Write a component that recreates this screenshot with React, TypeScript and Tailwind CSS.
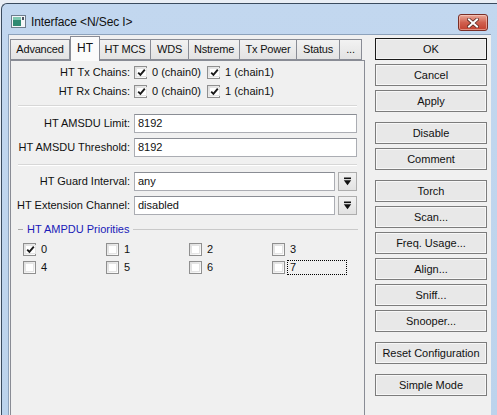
import React from "react";

const tabs: { label: string; w: number; active?: boolean }[] = [
  { label: "Advanced", w: 60 },
  { label: "HT", w: 30, active: true },
  { label: "HT MCS", w: 51 },
  { label: "WDS", w: 38 },
  { label: "Nstreme", w: 51 },
  { label: "Tx Power", w: 57 },
  { label: "Status", w: 43 },
  { label: "...", w: 22 },
];

const buttonGroups: string[][] = [
  ["OK", "Cancel", "Apply"],
  ["Disable", "Comment"],
  ["Torch", "Scan...", "Freq. Usage...", "Align...", "Sniff...", "Snooper..."],
  ["Reset Configuration"],
  ["Simple Mode"],
];

function Check({ checked }: { checked?: boolean }) {
  return (
    <span className="w-[13px] h-[13px] shrink-0 border border-[#8f8f8f] bg-gradient-to-br from-[#dcdcdc] to-white p-[1px] flex">
      <span className="flex-1 bg-white border border-[#e4e4e4] flex items-center justify-center">
        {checked && (
          <svg width="9" height="9" viewBox="0 0 9 9">
            <path d="M1.2 4.6 L3.4 6.9 L7.8 1.6" fill="none" stroke="#1a1a1a" strokeWidth="1.9" />
          </svg>
        )}
      </span>
    </span>
  );
}

function CheckItem({ checked, label, focus }: { checked?: boolean; label: string; focus?: boolean }) {
  return (
    <div className="flex items-center h-[16px]">
      <Check checked={checked} />
      {focus ? (
        <span className="ml-[2px] pl-[2px] w-[60px] h-[15px] leading-[13px] border border-dotted border-black">
          {label}
        </span>
      ) : (
        <span className="ml-[5px]">{label}</span>
      )}
    </div>
  );
}

function Label({ text }: { text: string }) {
  return <div className="w-[120px] shrink-0 text-right pr-[1px] whitespace-nowrap">{text}</div>;
}

function TextField({ value, drop }: { value: string; drop?: boolean }) {
  return (
    <div className="flex flex-1 gap-[3px] ml-[3px]">
      <div className="flex-1 h-[19px] border border-[#abadb3] border-t-[#8a8d94] bg-white pl-[3px] leading-[17px]">
        {value}
      </div>
      {drop && (
        <div className="w-[19px] h-[19px] border border-[#adadad] bg-gradient-to-b from-[#f2f2f2] to-[#e2e2e2] flex items-center justify-center">
          <svg width="9" height="9" viewBox="0 0 9 9">
            <rect x="1" y="0.5" width="7" height="1.6" fill="#111" />
            <path d="M0.8 3.2 H8.2 L4.5 8.2 Z" fill="#111" />
          </svg>
        </div>
      )}
    </div>
  );
}

function Separator() {
  return <div className="mx-[7px] h-[2px] border-t border-[#d7d7d7] border-b border-b-white" />;
}

export default function App() {
  return (
    <div className="w-[497px] h-[415px] overflow-hidden bg-[#e9eef5] pl-[1px] pt-[3px] text-[11px] text-[#111] [font-family:'Liberation_Sans',Arial,sans-serif]">
      <div className="w-[496px] h-[412px] rounded-tl-[6px] border-l border-t border-[#3a4b5e] bg-gradient-to-b from-[#c2d7ef] to-[#bcd3ec] flex flex-col">
        {/* title bar */}
        <div className="h-[30px] shrink-0 flex items-center pl-[9px] pr-[9px] pt-[3px]">
          <svg width="15" height="13" viewBox="0 0 15 13" className="mt-[2px]">
            <rect x="0.5" y="0.5" width="14" height="12" fill="#f4f6f8" stroke="#6d7c8c" />
            <rect x="2" y="2" width="8" height="9" fill="#2f8a72" />
            <rect x="2" y="2" width="8" height="3" fill="#7fc7b0" />
            <rect x="11" y="2" width="2" height="3" fill="#4a5563" />
          </svg>
          <span className="ml-[5px] mt-[2px] text-[12px] tracking-[-0.1px]">Interface &lt;N/Sec I&gt;</span>
          <div className="ml-auto mt-[4px] w-[30px] h-[17px] rounded-[3px] border border-[#7a2e26] bg-gradient-to-b from-[#e9a99a] via-[#d0604f] to-[#c2402f] flex items-center justify-center shadow-[inset_0_0_0_1px_rgba(255,220,210,0.5)]">
            <svg width="12" height="10" viewBox="0 0 12 10">
              <path d="M2 1.5 L10 8.5 M10 1.5 L2 8.5" stroke="#5a2a24" strokeWidth="3.6" strokeLinecap="square" />
              <path d="M2 1.5 L10 8.5 M10 1.5 L2 8.5" stroke="#ffffff" strokeWidth="2" strokeLinecap="square" />
            </svg>
          </div>
        </div>

        {/* frame + client area */}
        <div className="flex flex-1 min-h-0 pl-[6px] pr-[6px]">
          <div className="flex-1 flex border-l border-t border-[#8da2bb] bg-[#f0f0f0]">
            {/* tabs and page */}
            <div className="w-[355px] shrink-0 flex flex-col ml-[1px]">
              <div className="h-[25px] flex items-end shrink-0">
                {tabs.map((t) =>
                  t.active ? (
                    <div
                      key={t.label}
                      style={{ width: t.w }}
                      className="h-[25px] -mb-[1px] relative z-10 border border-b-0 border-[#898c95] bg-[#fbfbfb] flex items-center justify-center text-[12px] pb-[2px]"
                    >
                      {t.label}
                    </div>
                  ) : (
                    <div
                      key={t.label}
                      style={{ width: t.w }}
                      className="h-[21px] border border-l-0 first:border-l border-[#898c95] bg-gradient-to-b from-[#f2f2f2] to-[#e3e3e3] flex items-center justify-center whitespace-nowrap tracking-[-0.2px]"
                    >
                      {t.label}
                    </div>
                  )
                )}
              </div>

              <div className="flex-1 border border-[#898c95] bg-[#f0f0f0] border-b-0">
                <div className="mt-[3px] flex items-center h-[16px]">
                  <Label text="HT Tx Chains:" />
                  <div className="ml-[3px] flex items-center">
                    <div className="w-[73px]"><CheckItem checked label="0 (chain0)" /></div>
                    <CheckItem checked label="1 (chain1)" />
                  </div>
                </div>
                <div className="mt-[3px] flex items-center h-[16px]">
                  <Label text="HT Rx Chains:" />
                  <div className="ml-[3px] flex items-center">
                    <div className="w-[73px]"><CheckItem checked label="0 (chain0)" /></div>
                    <CheckItem checked label="1 (chain1)" />
                  </div>
                </div>

                <div className="mt-[6px]"><Separator /></div>

                <div className="mt-[7px] flex items-center pr-[7px]">
                  <Label text="HT AMSDU Limit:" />
                  <TextField value="8192" />
                </div>
                <div className="mt-[5px] flex items-center pr-[7px]">
                  <Label text="HT AMSDU Threshold:" />
                  <TextField value="8192" />
                </div>

                <div className="mt-[7px]"><Separator /></div>

                <div className="mt-[6px] flex items-center pr-[7px]">
                  <Label text="HT Guard Interval:" />
                  <TextField value="any" drop />
                </div>
                <div className="mt-[5px] flex items-center pr-[7px]">
                  <Label text="HT Extension Channel:" />
                  <TextField value="disabled" drop />
                </div>

                {/* priorities group */}
                <div className="mt-[7px] flex items-center pl-[7px] pr-[6px] h-[14px]">
                  <div className="w-[5px] border-t border-[#a9a9a9]" />
                  <span className="mx-[4px] text-[#1a1ab8]">HT AMPDU Priorities</span>
                  <div className="flex-1 border-t border-[#c9c9c9]" />
                </div>
                <div className="mt-[5px] pl-[12px] grid grid-cols-[83px_83px_83px_83px] gap-y-[2px]">
                  <CheckItem checked label="0" />
                  <CheckItem label="1" />
                  <CheckItem label="2" />
                  <CheckItem label="3" />
                  <CheckItem label="4" />
                  <CheckItem label="5" />
                  <CheckItem label="6" />
                  <CheckItem label="7" focus />
                </div>
              </div>
            </div>

            {/* command buttons */}
            <div className="ml-[10px] w-[112px] shrink-0 pt-[3px] flex flex-col gap-[10px]">
              {buttonGroups.map((g, i) => (
                <div key={i} className="flex flex-col gap-[4px]">
                  {g.map((b) => (
                    <div
                      key={b}
                      className={
                        "h-[22px] flex items-center justify-center bg-[#e8e8e8] border " +
                        (b === "OK" ? "border-[#1a1a1a] shadow-[inset_0_0_0_1px_#f4f4f4]" : "border-[#7c7c7c] shadow-[inset_0_0_0_1px_#f7f7f7]")
                      }
                    >
                      {b}
                    </div>
                  ))}
                </div>
              ))}
            </div>
          </div>
        </div>
      </div>
    </div>
  );
}
